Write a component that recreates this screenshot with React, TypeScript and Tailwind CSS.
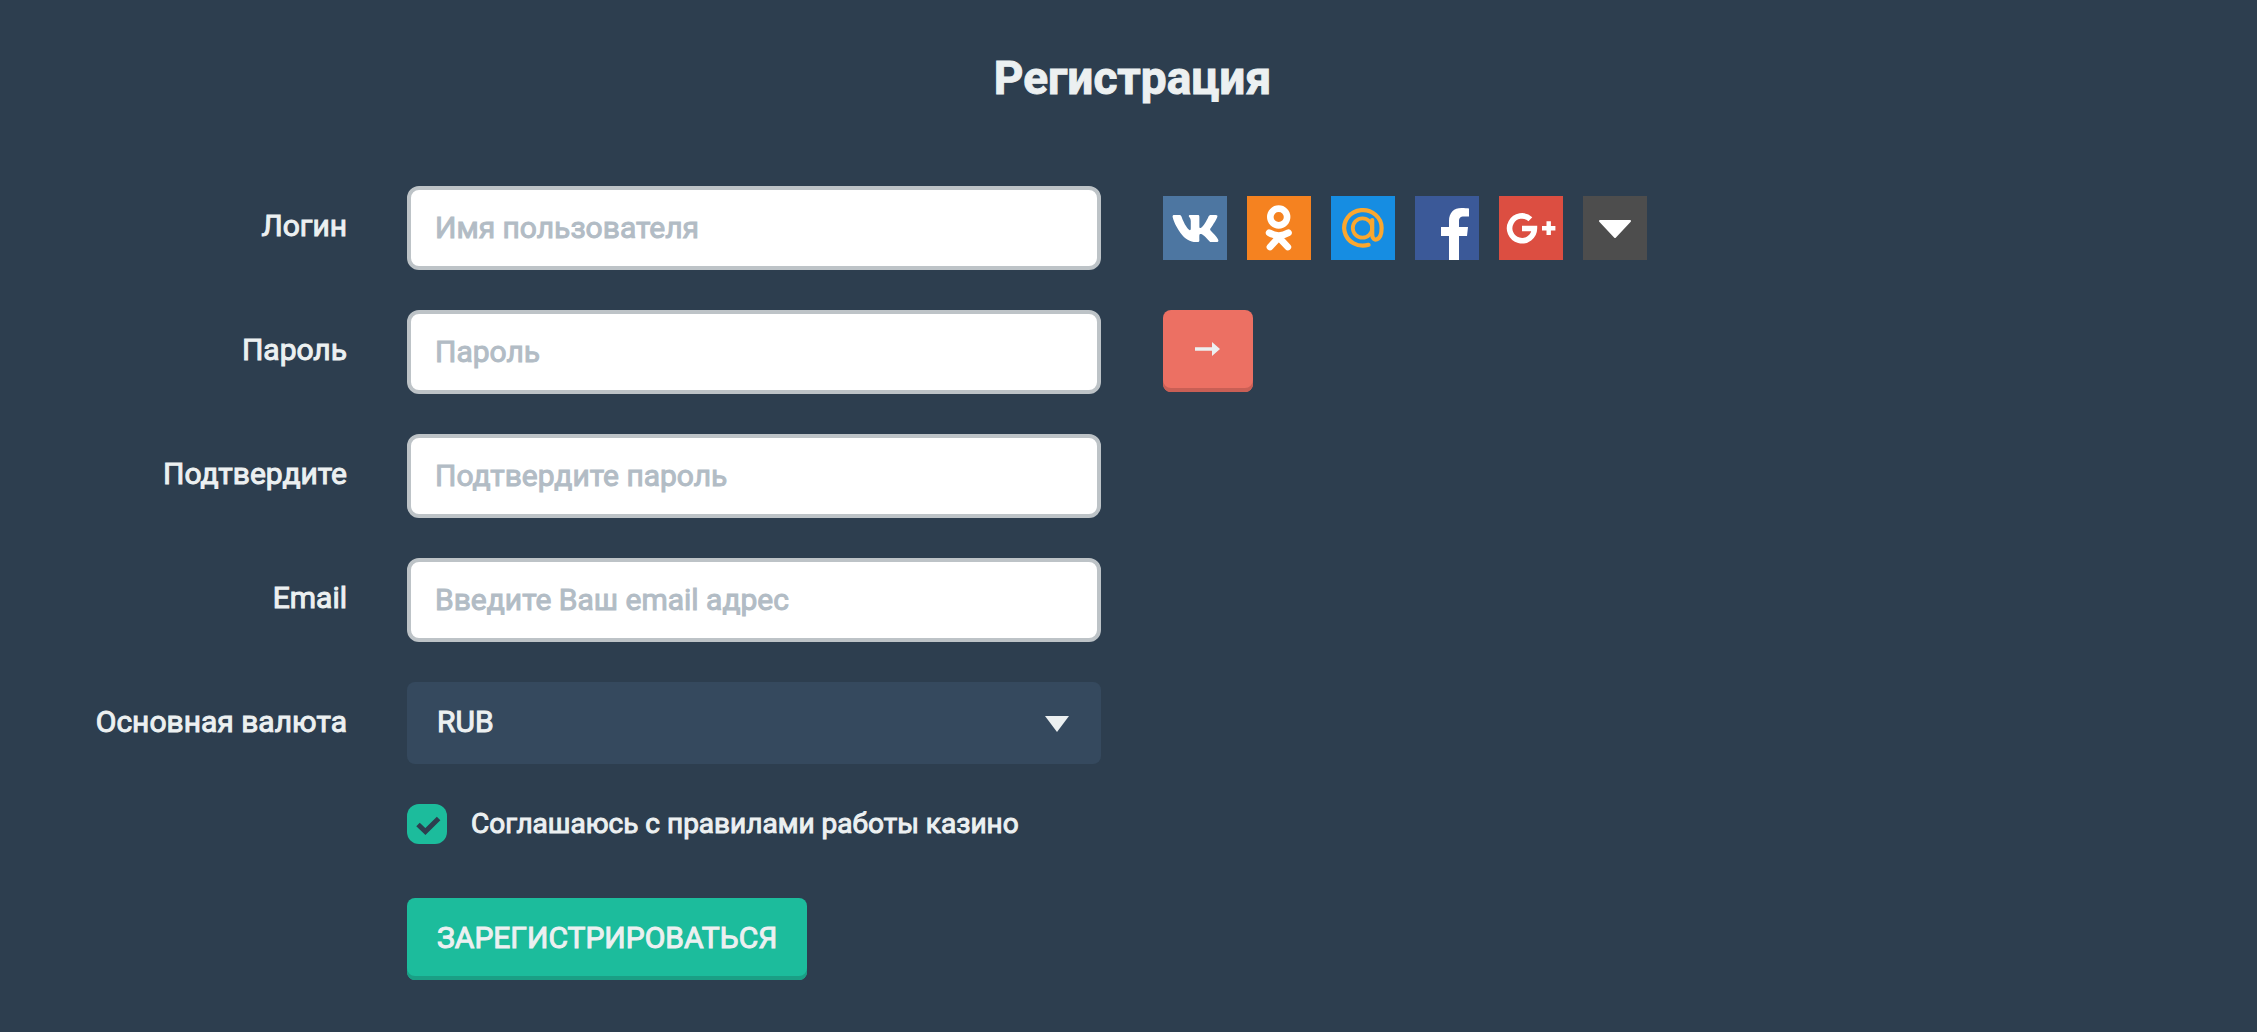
import { useState } from "react";
import type { FormEvent, ReactNode } from "react";
import { FaVk } from "react-icons/fa";

const fields = [
  { id: "login", label: "Логин", placeholder: "Имя пользователя", type: "text" },
  { id: "password", label: "Пароль", placeholder: "Пароль", type: "password" },
  { id: "confirm", label: "Подтвердите", placeholder: "Подтвердите пароль", type: "password" },
  { id: "email", label: "Email", placeholder: "Введите Ваш email адрес", type: "email" },
];

function OdnoklassnikiIcon() {
  return (
    <svg viewBox="0 0 64 64" className="size-16" fill="none" stroke="#fff" strokeLinecap="round" strokeLinejoin="round" aria-hidden="true">
      <circle cx="31.7" cy="21" r="8.4" strokeWidth="6.6" />
      <path d="M22.2 36.8Q31.8 42.4 41.4 36.8M31.8 41.4L23 51M31.8 41.4L40.8 51" strokeWidth="6.8" />
    </svg>
  );
}

function MailruIcon() {
  return (
    <svg viewBox="0 0 64 64" className="size-16" fill="none" stroke="#faa72f" strokeLinecap="round" aria-hidden="true">
      <circle cx="31.5" cy="32" r="9.7" strokeWidth="3.8" />
      <path d="M41.2 24V38.5C41.2 46.5 50.6 45.5 50.6 32A18.7 17.8 0 1 0 37.6 48.8" strokeWidth="4.2" />
    </svg>
  );
}

function FacebookIcon() {
  return (
    <svg viewBox="0 0 64 64" className="size-16" fill="#fff" aria-hidden="true">
      <path d="M34 64V40H26V31H34V25C34 16.5 39 12 46.5 12C49.5 12 52 12.2 54 12.5V20.6H49C45 20.6 44 22.3 44 25.4V31H53L52 40H44V64Z" />
    </svg>
  );
}

function GooglePlusIcon() {
  return (
    <svg viewBox="0 0 64 64" className="size-16" fill="none" stroke="#fff" aria-hidden="true">
      <path d="M31.4 23.2A12.4 12.4 0 1 0 35.4 32.5H23" strokeWidth="5.6" />
      <path d="M43 32.2H56.4M49.7 25.2V39" strokeWidth="4.4" />
    </svg>
  );
}

function MoreIcon() {
  return (
    <svg viewBox="0 0 64 64" className="size-16" fill="#fff" stroke="#fff" strokeWidth="2" strokeLinejoin="round" aria-hidden="true">
      <path d="M17 25H47L32 41Z" />
    </svg>
  );
}

const tile = "flex size-16 items-center justify-center text-white";

function SocialLinks() {
  return (
    <div className="flex gap-5 pt-[10px]">
      <a href="#vk" aria-label="VK" className={`${tile} bg-[#4d76a1]`}>
        <FaVk size={49} aria-hidden="true" />
      </a>
      <a href="#ok" aria-label="OK" className={`${tile} bg-[#f58220]`}>
        <OdnoklassnikiIcon />
      </a>
      <a href="#mail" aria-label="Mail" className={`${tile} bg-[#168de2]`}>
        <MailruIcon />
      </a>
      <a href="#facebook" aria-label="Facebook" className={`${tile} bg-[#3b5998]`}>
        <FacebookIcon />
      </a>
      <a href="#google" aria-label="Google+" className={`${tile} bg-[#dc4e41]`}>
        <GooglePlusIcon />
      </a>
      <button type="button" aria-label="More" className={`${tile} bg-[#4d4d4d]`}>
        <MoreIcon />
      </button>
    </div>
  );
}

function Row({ label, htmlFor, side, children }: { label?: string; htmlFor?: string; side?: ReactNode; children: ReactNode }) {
  return (
    <div className="grid grid-cols-[377fr_754fr_1126fr]">
      <div className="pr-[30px] text-right">
        {label && (
          <label htmlFor={htmlFor} className="block leading-[80px] whitespace-nowrap">
            {label}
          </label>
        )}
      </div>
      <div className="px-[30px]">{children}</div>
      <div className="pl-8">{side}</div>
    </div>
  );
}

export default function App() {
  const [values, setValues] = useState<Record<string, string>>({});
  const [currency, setCurrency] = useState("RUB");
  const [agreed, setAgreed] = useState(true);

  const submit = (e: FormEvent) => {
    e.preventDefault();
  };

  const side: Record<string, ReactNode> = {
    login: <SocialLinks />,
    password: (
      <button
        type="button"
        aria-label="Next"
        className="flex h-[82px] w-[90px] items-center justify-center rounded-lg bg-[#ec7063] pb-1 shadow-[inset_0_-4px_0_#c95f55]"
      >
        <svg viewBox="0 0 26 14" className="h-[14px] w-[26px]" fill="#ecf0f1" aria-hidden="true">
          <path d="M0 5.2H17V0L25 7L17 14V8.8H0Z" />
        </svg>
      </button>
    ),
  };

  return (
    <main className="min-h-screen bg-[#2d3e4f] pb-[52px] font-[Roboto,sans-serif] text-[30px] text-[#ecf0f1] [-webkit-text-stroke:1px]">
      <h1 className="pt-[50px] pl-2 text-center text-[46px] leading-[56px] font-bold">Регистрация</h1>

      <form onSubmit={submit} className="flex flex-col gap-10 pt-20">
        {fields.map((f) => (
          <Row key={f.id} label={f.label} htmlFor={f.id} side={side[f.id]}>
            <input
              id={f.id}
              type={f.type}
              value={values[f.id] || ""}
              onChange={(e) => setValues({ ...values, [f.id]: e.target.value })}
              placeholder={f.placeholder}
              className="block h-[84px] w-full rounded-xl border-4 border-[#bdc3c7] bg-white px-6 pb-[2px] text-[#34495e] placeholder:text-[#b2bcc5] focus:border-[#1cbc9c] focus:outline-none"
            />
          </Row>
        ))}

        <Row label="Основная валюта" htmlFor="currency">
          <div className="relative">
            <select
              id="currency"
              value={currency}
              onChange={(e) => setCurrency(e.target.value)}
              className="block h-[82px] w-full appearance-none rounded-lg bg-[#35495e] px-[30px] pb-1 focus:outline-none"
            >
              <option>RUB</option>
              <option>USD</option>
              <option>EUR</option>
            </select>
            <svg viewBox="0 0 24 16" className="pointer-events-none absolute top-[34px] right-8 h-4 w-6" fill="#ecf0f1" aria-hidden="true">
              <path d="M0 0H24L12 16Z" />
            </svg>
          </div>
        </Row>

        <Row>
          <label className="flex items-center gap-6 text-[28px] leading-10 whitespace-nowrap">
            <span className="relative size-10 shrink-0">
              <input
                type="checkbox"
                checked={agreed}
                onChange={(e) => setAgreed(e.target.checked)}
                className="block size-10 appearance-none rounded-xl bg-[#bdc3c7] checked:bg-[#1cbc9c]"
              />
              {agreed && (
                <svg viewBox="0 0 40 40" className="pointer-events-none absolute inset-0 size-10" fill="none" stroke="#2d3e4f" strokeWidth="5" aria-hidden="true">
                  <path d="M11 20.5L18.4 27.6L31.6 14.4" strokeLinejoin="miter" />
                </svg>
              )}
            </span>
            Соглашаюсь с правилами работы казино
          </label>
        </Row>

        <div className="pt-[14px]">
          <Row>
            <button
              type="submit"
              className="h-[82px] rounded-lg bg-[#1cbc9c] px-[30px] pb-1 whitespace-nowrap shadow-[inset_0_-4px_0_#1a9f85]"
            >
              ЗАРЕГИСТРИРОВАТЬСЯ
            </button>
          </Row>
        </div>
      </form>
    </main>
  );
}
